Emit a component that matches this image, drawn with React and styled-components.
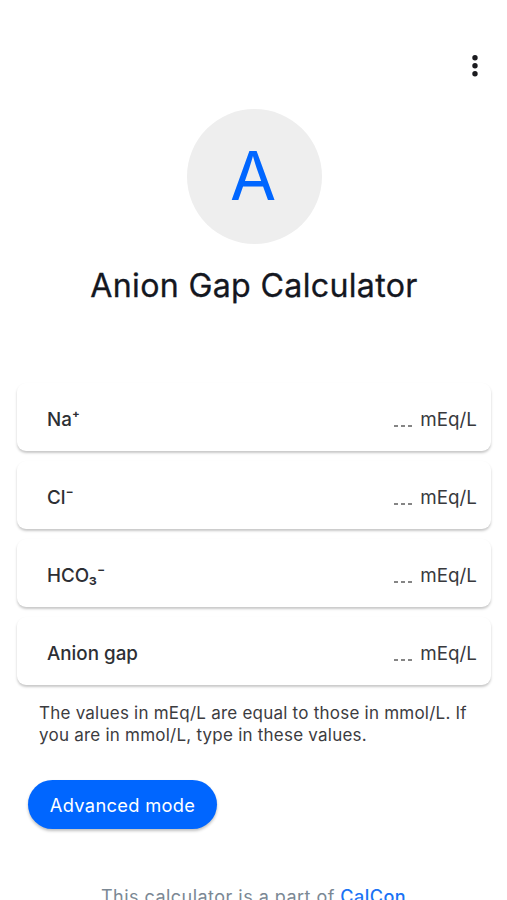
import React from 'react'
import styled, { createGlobalStyle } from 'styled-components'

const fields = [
    { label: 'Na⁺' },
    { label: 'Cl⁻' },
    { label: 'HCO₃⁻' },
    { label: 'Anion gap' },
]

const App = () => {
    return(
        <Page>
            <GlobalStyle />
            <TopBar>
                <MenuButton aria-label="Menu">
                    <svg viewBox="0 0 6 22" width="6" height="22">
                        <circle cx="3" cy="2.8" r="2.7" />
                        <circle cx="3" cy="10.8" r="2.7" />
                        <circle cx="3" cy="18.8" r="2.7" />
                    </svg>
                </MenuButton>
            </TopBar>
            <Avatar>A</Avatar>
            <Title>Anion Gap Calculator</Title>
            <Fields>
                {fields.map(field => (
                    <Field key={field.label}>
                        <Label>{field.label}</Label>
                        <Value>
                            <Blank />
                            <Unit>mEq/L</Unit>
                        </Value>
                    </Field>
                ))}
            </Fields>
            <Note>
                The values in mEq/L are equal to those in mmol/L. If<br />
                you are in mmol/L, type in these values.
            </Note>
            <ModeButton>Advanced mode</ModeButton>
            <Footer>This calculator is a part of <a>CalCon</a></Footer>
        </Page>
    )
}

const GlobalStyle = createGlobalStyle`
    * {
        box-sizing: border-box;
    }

    body {
        margin: 0;
        background: white;
        overflow: hidden;
        font-family: Inter, "Liberation Sans", sans-serif;
        color: #14171f;
    }
`
const Page = styled.div`
    height: 900px;
    overflow: hidden;
    display: flex;
    flex-direction: column;
`
const TopBar = styled.div`
    display: flex;
    justify-content: flex-end;
    padding: 55px 29.5px 0 0;
    height: 109px;
    flex-shrink: 0;
`
const MenuButton = styled.button`
    border: 0;
    padding: 0;
    height: 22px;
    background: none;
    cursor: pointer;

    svg {
        display: block;
        fill: #1b1b1f;
    }
`
const Avatar = styled.div`
    display: flex;
    align-items: center;
    justify-content: center;
    align-self: center;
    flex-shrink: 0;
    width: 135px;
    height: 135px;
    margin-left: 1px;
    padding: 0 2px 2px 0;
    border-radius: 50%;
    background: #eeeeee;
    color: #0066ff;
    font-size: 67px;
`
const Title = styled.h1`
    margin: 22px 0 0 1px;
    font-size: 32.2px;
    font-weight: 430;
    line-height: 40px;
    letter-spacing: 0.3px;
    text-align: center;
    white-space: nowrap;
    -webkit-text-stroke: 0.3px #14171f;
`
const Fields = styled.div`
    display: flex;
    flex-direction: column;
    gap: 10px;
    padding: 77px 16px 0 17px;
`
const Field = styled.div`
    display: flex;
    align-items: center;
    justify-content: space-between;
    height: 68px;
    padding: 4px 14px 0 30px;
    border-radius: 9px;
    background: white;
    box-shadow: 0 2px 2.5px rgba(0, 0, 0, 0.22);
    font-size: 18.8px;
`
const Label = styled.label`
    font-weight: 500;
    color: #2d2f34;
`
const Value = styled.div`
    display: flex;
    align-items: center;
    gap: 7px;
`
const Blank = styled.div`
    align-self: flex-end;
    width: 19px;
    height: 2px;
    margin-bottom: 4px;
    background: repeating-linear-gradient(90deg, #858585 0 4px, transparent 4px 7px);
`
const Unit = styled.span`
    color: #38393d;
`
const Note = styled.p`
    margin: 17px 0 0 39px;
    font-size: 17px;
    line-height: 22px;
    letter-spacing: 0.23px;
    color: #3c3c3f;
    white-space: nowrap;
`
const ModeButton = styled.button`
    align-self: flex-start;
    flex-shrink: 0;
    width: 189px;
    height: 49px;
    margin: 34px 0 0 28px;
    padding: 1px 0 0;
    border: 0;
    border-radius: 25px;
    background: #0066ff;
    box-shadow: 0 2px 3px rgba(0, 0, 0, 0.25);
    color: white;
    font-family: inherit;
    font-size: 18.3px;
    letter-spacing: 0.3px;
    cursor: pointer;
`
const Footer = styled.footer`
    margin-top: 56px;
    flex-shrink: 0;
    font-size: 18px;
    line-height: 24px;
    letter-spacing: 0.47px;
    text-align: center;
    color: #7b8894;

    a {
        color: #1a73f5;
        font-weight: 500;
    }
`

export default App
